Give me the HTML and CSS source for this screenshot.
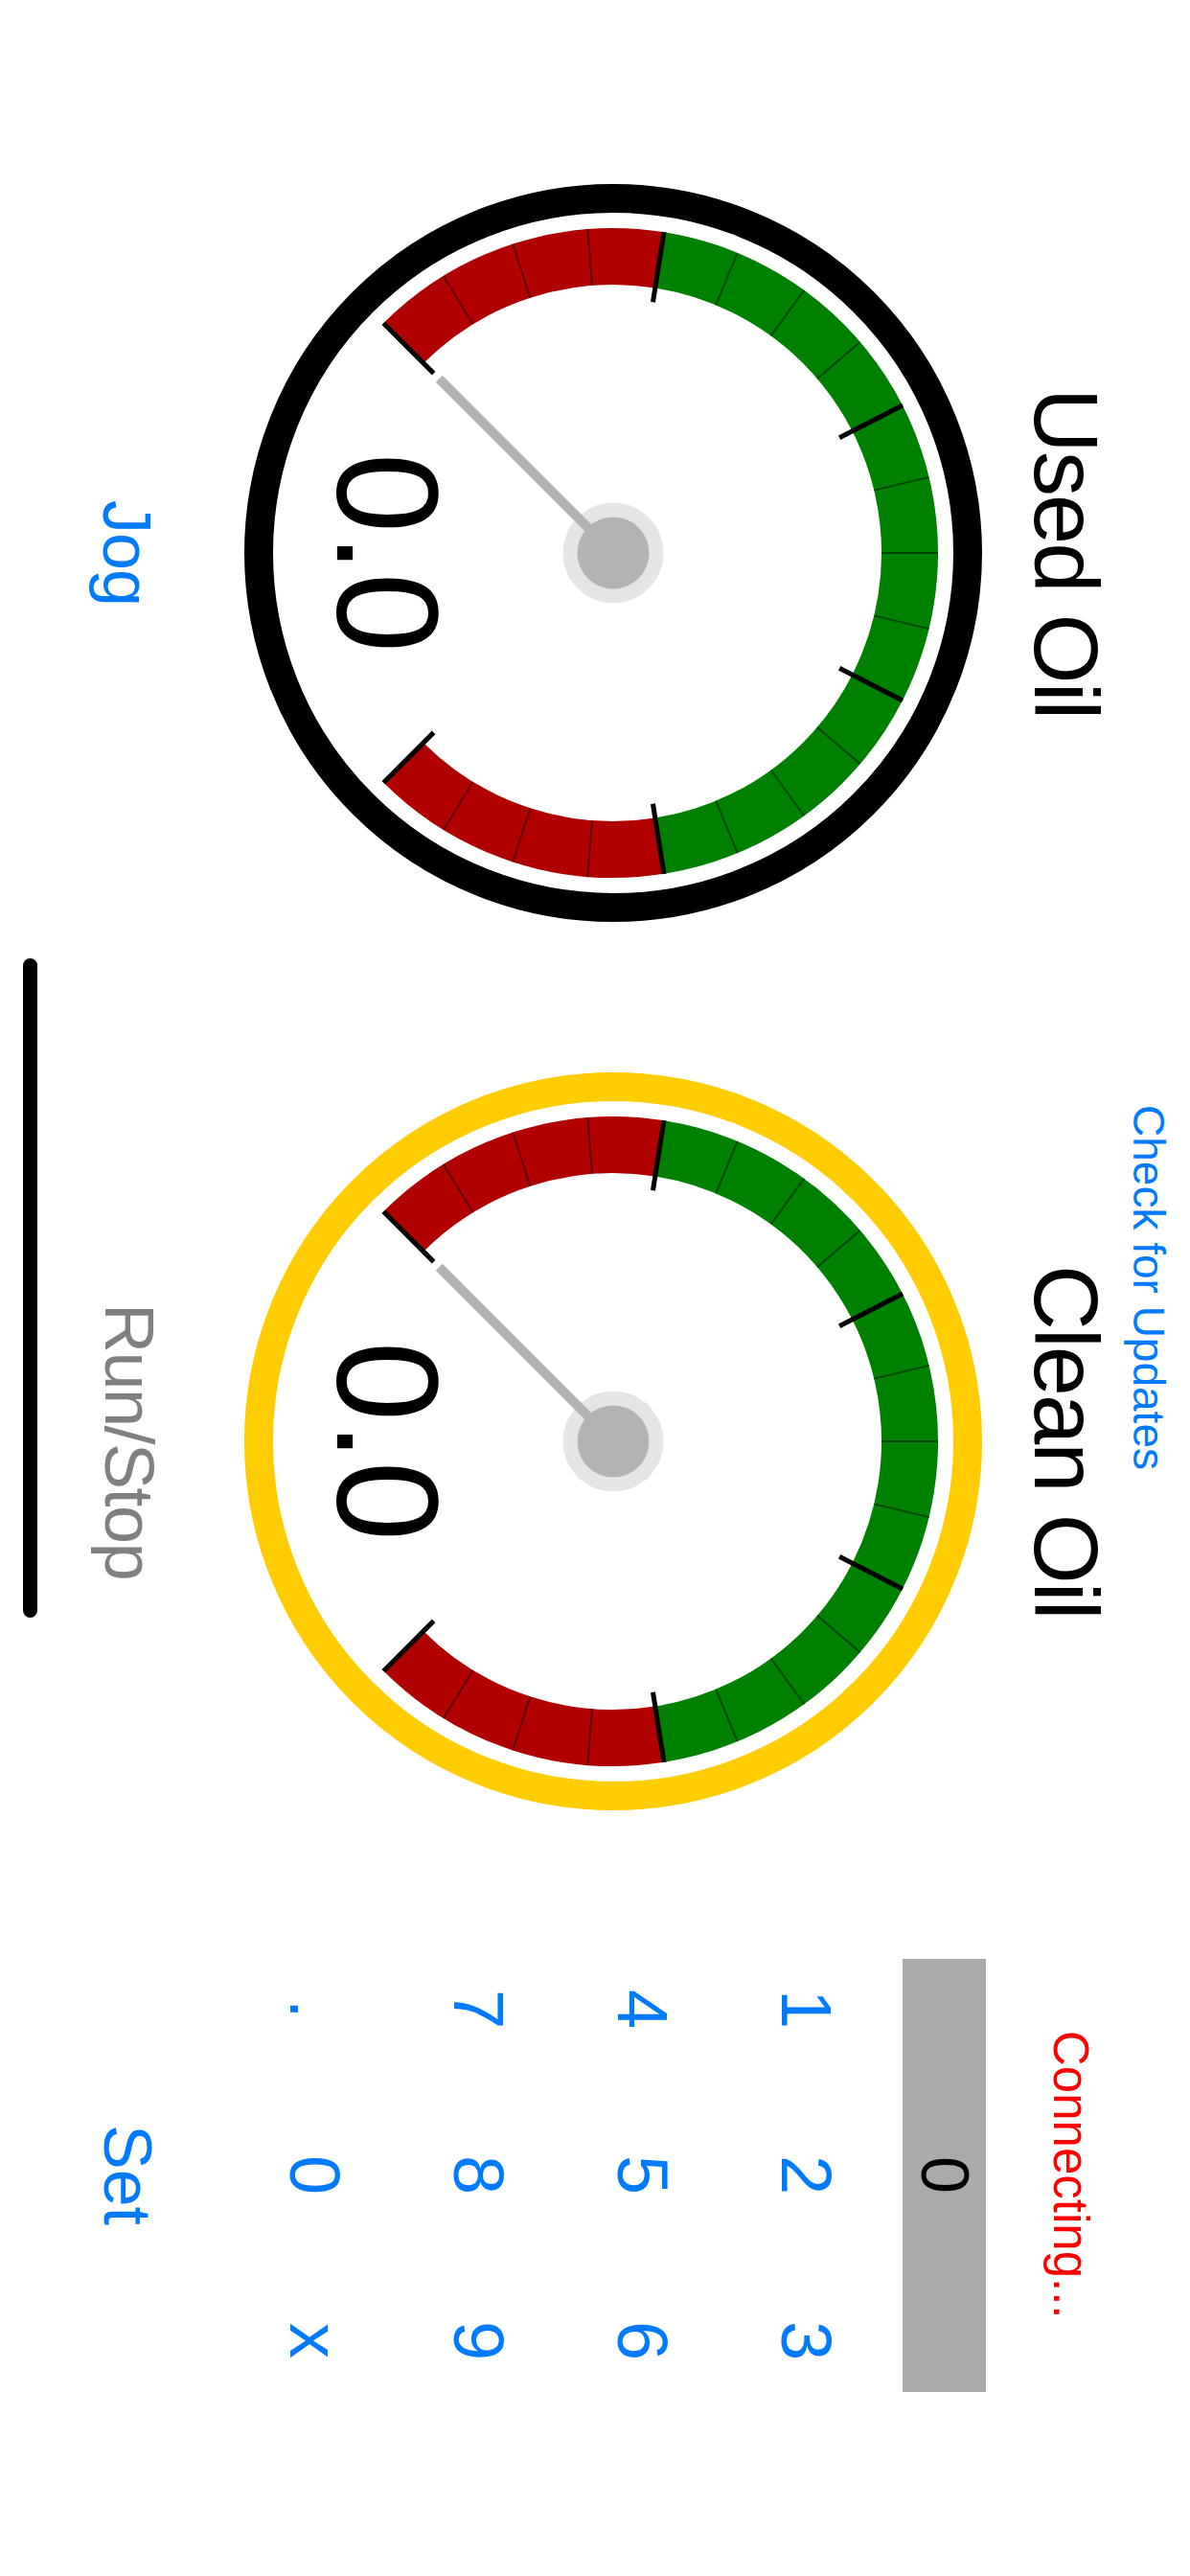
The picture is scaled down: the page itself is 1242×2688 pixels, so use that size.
FILE: index.html
```html
<!DOCTYPE html>
<html lang="en">
<head>
    <meta charset="UTF-8">
    <meta name="viewport" content="width=device-width, initial-scale=1.0">
    <title>Oil Monitor</title>
    <link rel="stylesheet" href="styles.css">
</head>
<body>
    <div class="screen">
        <!-- Used oil -->
        <div class="gauge-col">
            <h2 class="gauge-title">Used Oil</h2>
            <svg class="gauge" viewBox="-385 -385 770 770">
                <g transform="rotate(90)">
                    <circle class="ring ring-used" r="370"/>
                    <circle class="band band-red" r="309.5" transform="rotate(135)" stroke-dasharray="291.7 2000"/>
                    <circle class="band band-green" r="309.5" transform="rotate(189)" stroke-dasharray="875.1 2000"/>
                    <circle class="band band-red" r="309.5" transform="rotate(351)" stroke-dasharray="291.7 2000"/>
                    <g class="minor">
                        <line y1="-339" y2="-280" transform="rotate(238.5)"/>
                        <line y1="-339" y2="-280" transform="rotate(252)"/>
                        <line y1="-339" y2="-280" transform="rotate(265.5)"/>
                        <line y1="-339" y2="-280" transform="rotate(292.5)"/>
                        <line y1="-339" y2="-280" transform="rotate(306)"/>
                        <line y1="-339" y2="-280" transform="rotate(319.5)"/>
                        <line y1="-339" y2="-280" transform="rotate(346.5)"/>
                        <line y1="-339" y2="-280" transform="rotate(0)"/>
                        <line y1="-339" y2="-280" transform="rotate(13.5)"/>
                        <line y1="-339" y2="-280" transform="rotate(40.5)"/>
                        <line y1="-339" y2="-280" transform="rotate(54)"/>
                        <line y1="-339" y2="-280" transform="rotate(67.5)"/>
                        <line y1="-339" y2="-280" transform="rotate(94.5)"/>
                        <line y1="-339" y2="-280" transform="rotate(108)"/>
                        <line y1="-339" y2="-280" transform="rotate(121.5)"/>
                    </g>
                    <g class="major">
                        <line y1="-339" y2="-265" transform="rotate(225)"/>
                        <line y1="-339" y2="-265" transform="rotate(279)"/>
                        <line y1="-339" y2="-265" transform="rotate(333)"/>
                        <line y1="-339" y2="-265" transform="rotate(27)"/>
                        <line y1="-339" y2="-265" transform="rotate(81)"/>
                        <line y1="-339" y2="-265" transform="rotate(135)"/>
                    </g>
                    <circle class="hub-outer" r="52.5"/>
                    <line class="needle" y2="-257" transform="rotate(225)"/>
                    <circle class="hub-inner" r="37.5"/>
                    <text class="value" y="288">0.0</text>
                </g>
            </svg>
            <div class="text-btn jog" role="button">Jog</div>
        </div>

        <!-- Clean oil -->
        <div class="gauge-col">
            <a class="update-link" href="#">Check for Updates</a>
            <h2 class="gauge-title">Clean Oil</h2>
            <svg class="gauge" viewBox="-385 -385 770 770">
                <g transform="rotate(90)">
                    <circle class="ring ring-clean" r="370"/>
                    <circle class="band band-red" r="309.5" transform="rotate(135)" stroke-dasharray="291.7 2000"/>
                    <circle class="band band-green" r="309.5" transform="rotate(189)" stroke-dasharray="875.1 2000"/>
                    <circle class="band band-red" r="309.5" transform="rotate(351)" stroke-dasharray="291.7 2000"/>
                    <g class="minor">
                        <line y1="-339" y2="-280" transform="rotate(238.5)"/>
                        <line y1="-339" y2="-280" transform="rotate(252)"/>
                        <line y1="-339" y2="-280" transform="rotate(265.5)"/>
                        <line y1="-339" y2="-280" transform="rotate(292.5)"/>
                        <line y1="-339" y2="-280" transform="rotate(306)"/>
                        <line y1="-339" y2="-280" transform="rotate(319.5)"/>
                        <line y1="-339" y2="-280" transform="rotate(346.5)"/>
                        <line y1="-339" y2="-280" transform="rotate(0)"/>
                        <line y1="-339" y2="-280" transform="rotate(13.5)"/>
                        <line y1="-339" y2="-280" transform="rotate(40.5)"/>
                        <line y1="-339" y2="-280" transform="rotate(54)"/>
                        <line y1="-339" y2="-280" transform="rotate(67.5)"/>
                        <line y1="-339" y2="-280" transform="rotate(94.5)"/>
                        <line y1="-339" y2="-280" transform="rotate(108)"/>
                        <line y1="-339" y2="-280" transform="rotate(121.5)"/>
                    </g>
                    <g class="major">
                        <line y1="-339" y2="-265" transform="rotate(225)"/>
                        <line y1="-339" y2="-265" transform="rotate(279)"/>
                        <line y1="-339" y2="-265" transform="rotate(333)"/>
                        <line y1="-339" y2="-265" transform="rotate(27)"/>
                        <line y1="-339" y2="-265" transform="rotate(81)"/>
                        <line y1="-339" y2="-265" transform="rotate(135)"/>
                    </g>
                    <circle class="hub-outer" r="52.5"/>
                    <line class="needle" y2="-257" transform="rotate(225)"/>
                    <circle class="hub-inner" r="37.5"/>
                    <text class="value" y="288">0.0</text>
                </g>
            </svg>
            <div class="run-label">Run/Stop</div>
            <div class="run-track"></div>
        </div>

        <!-- Keypad -->
        <div class="keypad-col">
            <div class="status">Connecting...</div>
            <div class="display">0</div>
            <div class="keypad">
                <div class="key" role="button">1</div>
                <div class="key" role="button">2</div>
                <div class="key" role="button">3</div>
                <div class="key" role="button">4</div>
                <div class="key" role="button">5</div>
                <div class="key" role="button">6</div>
                <div class="key" role="button">7</div>
                <div class="key" role="button">8</div>
                <div class="key" role="button">9</div>
                <div class="key" role="button">.</div>
                <div class="key" role="button">0</div>
                <div class="key" role="button">x</div>
            </div>
            <div class="text-btn set" role="button">Set</div>
        </div>
    </div>
</body>
</html>
```

FILE: styles.css
```css
:root {
    --blue: #007aff;
    --red: #b00000;
    --green: #008000;
    --yellow: #ffcc00;
    --hub: #b3b3b3;
    --hub-ring: #e5e5e5;
}

body {
    margin: 0;
    width: 1242px;
    height: 2688px;
    overflow: hidden;
    background-color: #fff;
    font-family: "Liberation Sans", Arial, sans-serif;
    color: #000;
}

/* the app is in landscape, the capture is portrait: lay it out sideways */
.screen {
    writing-mode: vertical-rl;
    text-orientation: sideways;
    inline-size: 2688px;
    block-size: 1242px;
    display: flex;
    align-items: flex-start;
}

.gauge-col {
    flex: none;
    inline-size: 770px;
    display: flex;
    flex-direction: column;
    align-items: center;
    padding-block-start: 20px;
}

.gauge-col:first-child {
    margin-inline-start: 192px;
    padding-block-start: 83px;
}

.gauge-col + .gauge-col {
    margin-inline-start: 157px;
}

.update-link {
    align-self: flex-start;
    margin-inline-start: 34px;
    margin-block-end: 17px;
    block-size: 46px;
    font-size: 46px;
    line-height: 46px;
    color: var(--blue);
    text-decoration: none;
}

.gauge-title {
    margin: 0;
    font-size: 94px;
    line-height: 94px;
    font-weight: normal;
    letter-spacing: -2px;
}

.gauge {
    display: block;
    inline-size: 770px;
    block-size: 770px;
    margin-block-start: 40px;
}

.ring {
    fill: none;
    stroke-width: 30;
}

.ring-used {
    stroke: #000;
}

.ring-clean {
    stroke: var(--yellow);
}

.band {
    fill: none;
    stroke-width: 59;
}

.band-red {
    stroke: var(--red);
}

.band-green {
    stroke: var(--green);
}

.minor line {
    stroke: rgba(0, 0, 0, 0.45);
    stroke-width: 2;
}

.major line {
    stroke: #000;
    stroke-width: 5;
}

.hub-outer {
    fill: var(--hub-ring);
}

.hub-inner {
    fill: var(--hub);
}

.needle {
    stroke: var(--hub);
    stroke-width: 10;
}

.value {
    writing-mode: horizontal-tb;
    font-size: 150px;
    text-anchor: middle;
    fill: #000;
}

.text-btn, .key {
    color: var(--blue);
    cursor: pointer;
}

.jog {
    margin-block-start: 88px;
    font-size: 70px;
    line-height: 70px;
    letter-spacing: -1px;
}

.run-label {
    margin-block-start: 84px;
    font-size: 72px;
    line-height: 72px;
    letter-spacing: -1.5px;
    color: #808080;
}

.run-track {
    align-self: flex-start;
    margin-block-start: 60px;
    margin-inline-start: -119px;
    inline-size: 688px;
    block-size: 15px;
    border-radius: 8px;
    background-color: #000;
}

.keypad-col {
    flex: none;
    inline-size: 519px;
    margin-inline-start: 121px;
    padding-block-start: 99px;
    display: flex;
    flex-direction: column;
    align-items: center;
}

.status {
    font-size: 51px;
    line-height: 51px;
    color: #ff0000;
}

.display {
    margin-block-start: 63px;
    inline-size: 452px;
    block-size: 87px;
    background-color: #aaaaaa;
    font-size: 70px;
    line-height: 87px;
    text-align: center;
}

.keypad {
    margin-block-start: 15px;
    display: grid;
    grid-template-columns: repeat(3, 173px);
    grid-auto-rows: 171px;
}

.key {
    font-size: 74px;
    line-height: 171px;
    text-align: center;
}

.set {
    margin-block-start: 75px;
    font-size: 70px;
    line-height: 70px;
}
```
